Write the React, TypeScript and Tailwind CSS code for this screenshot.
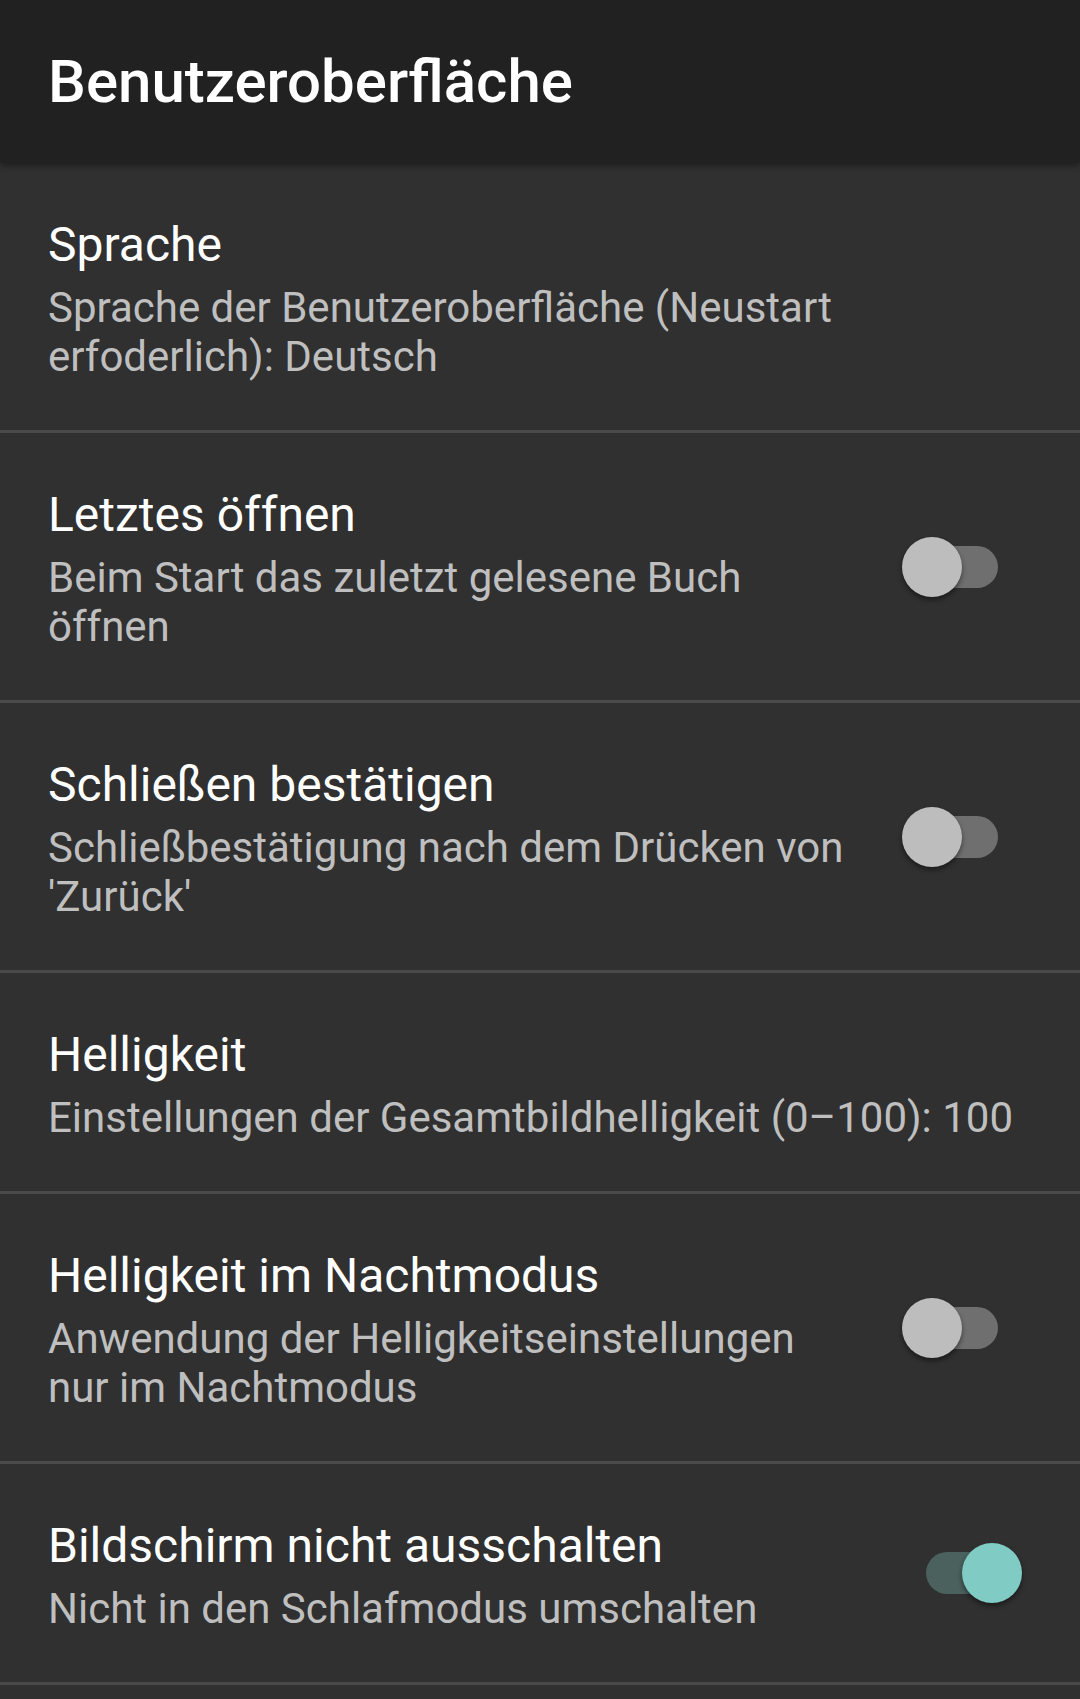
import { useState } from "react";

type Item = {
  title: string;
  summary: string;
  toggle?: boolean;
};

const items: Item[] = [
  {
    title: "Sprache",
    summary: "Sprache der Benutzeroberfläche (Neustart erfoderlich): Deutsch",
  },
  {
    title: "Letztes öffnen",
    summary: "Beim Start das zuletzt gelesene Buch öffnen",
    toggle: false,
  },
  {
    title: "Schließen bestätigen",
    summary: "Schließbestätigung nach dem Drücken von 'Zurück'",
    toggle: false,
  },
  {
    title: "Helligkeit",
    summary: "Einstellungen der Gesamtbildhelligkeit (0–100): 100",
  },
  {
    title: "Helligkeit im Nachtmodus",
    summary: "Anwendung der Helligkeitseinstellungen nur im Nachtmodus",
    toggle: false,
  },
  {
    title: "Bildschirm nicht ausschalten",
    summary: "Nicht in den Schlafmodus umschalten",
    toggle: true,
  },
];

const Switch = ({ initial }: { initial: boolean }) => {
  const [on, setOn] = useState(initial);

  return (
    <button
      type="button"
      role="switch"
      aria-checked={on}
      onClick={() => setOn(!on)}
      className={
        on
          ? "relative mr-[13px] h-[60px] w-[96px] shrink-0"
          : "relative mr-[37px] h-[60px] w-[96px] shrink-0"
      }
    >
      <span
        className={
          on
            ? "absolute top-[9px] left-0 h-[42px] w-[92px] rounded-full bg-[#4a615e]"
            : "absolute top-[9px] right-0 h-[42px] w-[92px] rounded-full bg-[#6f6f6f]"
        }
      />
      <span
        className={
          on
            ? "absolute top-0 right-0 size-[60px] rounded-full bg-[#80cbc4] shadow-[0_3px_5px_rgba(0,0,0,0.45)]"
            : "absolute top-0 left-0 size-[60px] rounded-full bg-[#bdbdbd] shadow-[0_3px_5px_rgba(0,0,0,0.45)]"
        }
      />
    </button>
  );
};

const SettingRow = ({ item }: { item: Item }) => (
  <li className="flex items-center border-b-[3px] border-[#4a4a4a] pr-[45px] pl-[48px]">
    <div className={item.toggle !== undefined ? "w-[807px] pt-[54px] pb-[49px]" : "min-w-0 flex-1 pt-[54px] pb-[49px]"}>
      <div className="text-[48px] leading-[56px] text-white">{item.title}</div>
      <div className="mt-[10px] text-[42px] leading-[49px] text-[#bfbfbf]">{item.summary}</div>
    </div>
    {item.toggle !== undefined && (
      <div className="flex w-[180px] shrink-0 justify-end">
        <Switch initial={item.toggle} />
      </div>
    )}
  </li>
);

export default function App() {
  return (
    <div className="min-h-[1699px] w-[1080px] bg-[#303030] font-['Roboto',sans-serif]">
      <header className="relative z-10 flex h-[163px] items-center bg-[#212121] px-[48px] shadow-[0_3px_6px_rgba(0,0,0,0.35)]">
        <h1 className="text-[60px] leading-[70px] font-medium text-white">Benutzeroberfläche</h1>
      </header>
      <ul className="flex flex-col">
        {items.map((item) => (
          <SettingRow key={item.title} item={item} />
        ))}
      </ul>
    </div>
  );
}
